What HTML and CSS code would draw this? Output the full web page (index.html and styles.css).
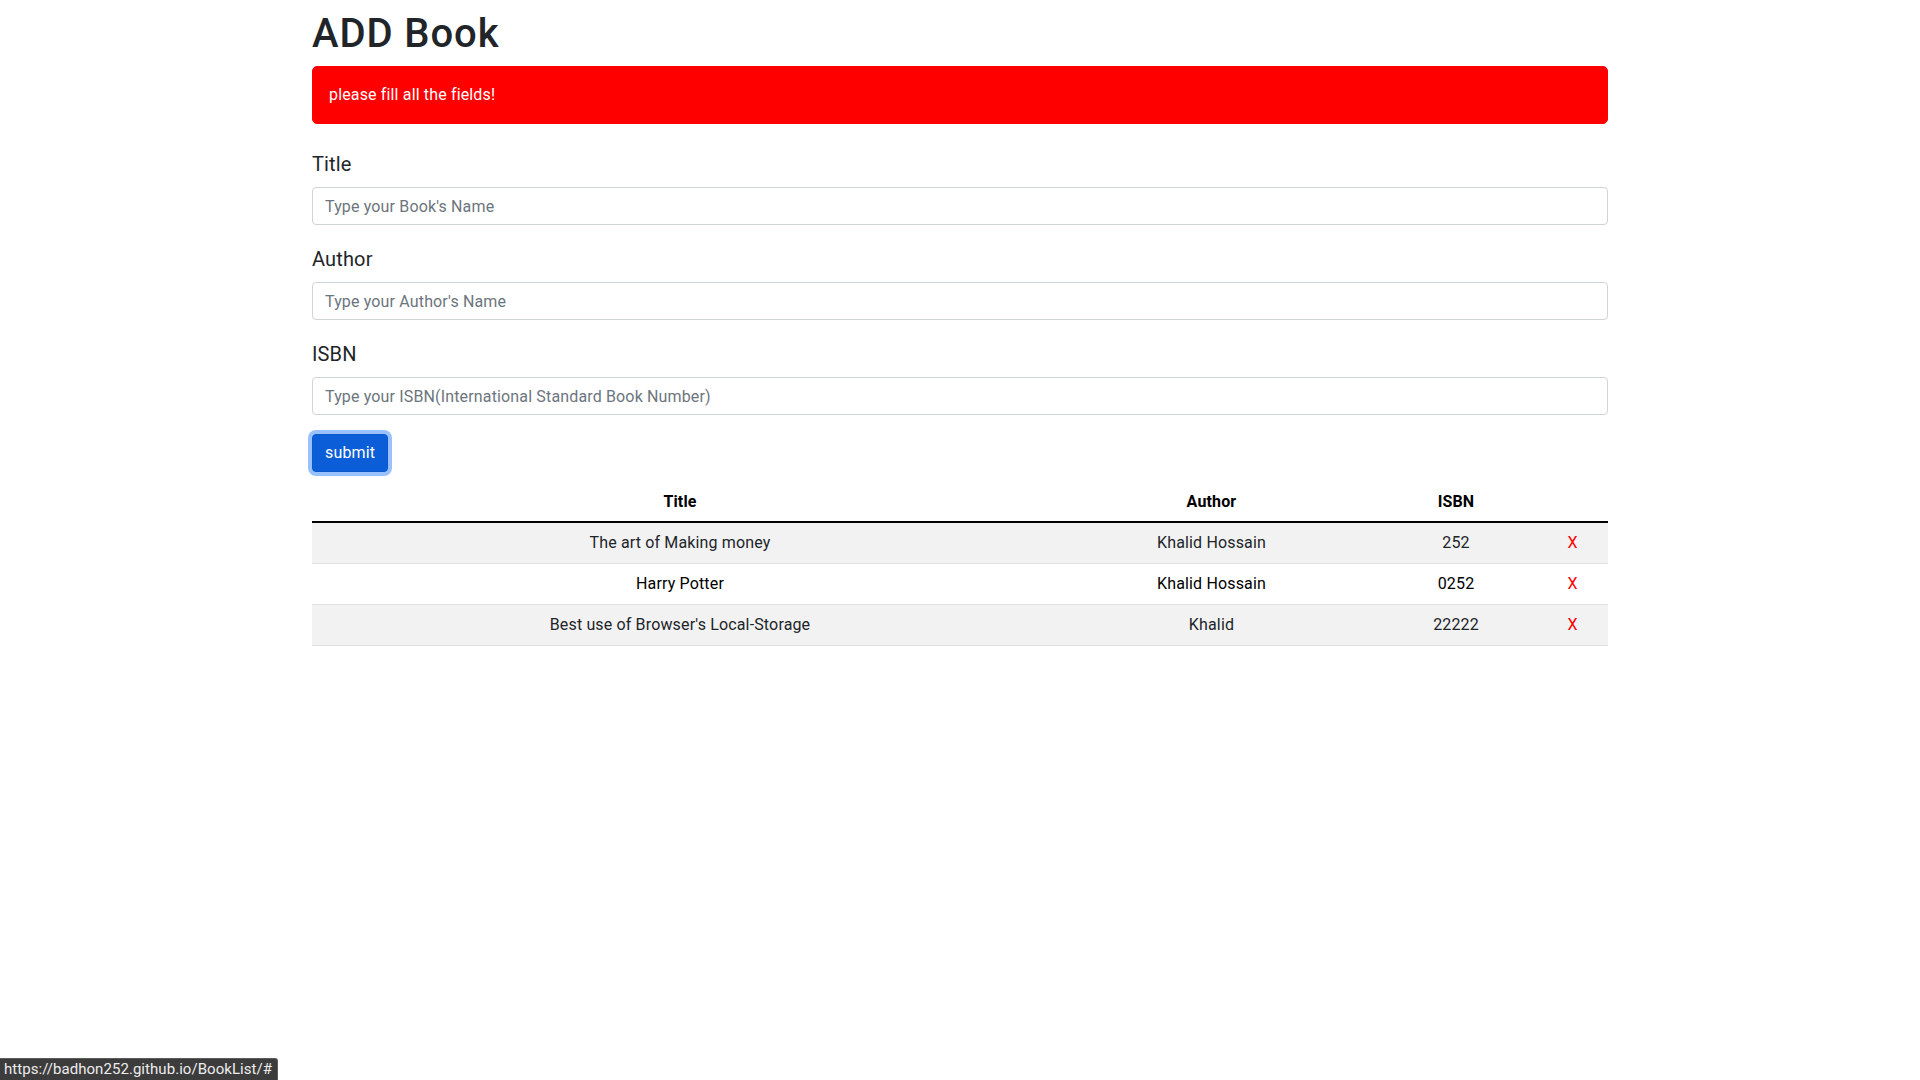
FILE: index.html
```html
<!DOCTYPE html>
<html lang="en">
<head>
<meta charset="utf-8">
<title>Book List</title>
<link rel="stylesheet" href="styles.css">
</head>
<body>
<div class="container">
  <h1 class="heading">ADD Book</h1>
  <div class="alert">please fill all the fields!</div>
  <form class="book-form">
    <div class="group">
      <label class="label" for="title">Title</label>
      <input class="field" id="title" type="text" placeholder="Type your Book's Name">
    </div>
    <div class="group">
      <label class="label" for="author">Author</label>
      <input class="field" id="author" type="text" placeholder="Type your Author's Name">
    </div>
    <div class="group">
      <label class="label" for="isbn">ISBN</label>
      <input class="field" id="isbn" type="text" placeholder="Type your ISBN(International Standard Book Number)">
    </div>
    <button class="submit" type="button">submit</button>
  </form>
  <table class="books">
    <colgroup>
      <col class="c-title"><col class="c-author"><col class="c-isbn"><col class="c-del">
    </colgroup>
    <thead>
      <tr><th>Title</th><th>Author</th><th>ISBN</th><th></th></tr>
    </thead>
    <tbody>
      <tr class="odd"><td>The art of Making money</td><td>Khalid Hossain</td><td>252</td><td><a class="del" href="#">X</a></td></tr>
      <tr class="even"><td>Harry Potter</td><td>Khalid Hossain</td><td>0252</td><td><a class="del" href="#">X</a></td></tr>
      <tr class="odd"><td>Best use of Browser's Local-Storage</td><td>Khalid</td><td>22222</td><td><a class="del" href="#">X</a></td></tr>
    </tbody>
  </table>
</div>
<div class="statusbar">https://badhon252.github.io/BookList/#</div>
</body>
</html>
```
FILE: styles.css
```css
* { box-sizing: border-box; }
html, body { margin: 0; padding: 0; }
body {
  font-family: Roboto, "Liberation Sans", sans-serif;
  font-size: 16px;
  line-height: 1.5;
  letter-spacing: 0.15px;
  color: #212529;
  background: #fff;
}
.container {
  width: 1320px;
  margin: 0 auto;
  padding: 10px 12px 0;
}
.heading {
  margin: 0 0 8px;
  font-size: 40px;
  font-weight: 500;
  line-height: 1.2;
  letter-spacing: 0.9px;
  color: #212529;
}
.alert {
  background: #ff0000;
  border: 1px solid #ff0000;
  border-radius: 5px;
  color: #fff;
  padding: 16px;
  margin-bottom: 25px;
}
.book-form { margin: 0; }
.group { margin-bottom: 19px; }
.label {
  display: block;
  font-size: 20px;
  line-height: 30px;
  margin-bottom: 8px;
  color: #212529;
}
.field {
  display: block;
  width: 100%;
  height: 38px;
  padding: 6px 12px;
  font-family: inherit;
  font-size: 16px;
  line-height: 24px;
  letter-spacing: inherit;
  color: #212529;
  background: #fff;
  border: 1px solid #ced4da;
  border-radius: 4px;
  outline: none;
}
.field::placeholder { color: #6c757d; opacity: 1; }
.submit {
  display: block;
  margin-top: 19px;
  height: 38px;
  padding: 6px 12px;
  font-family: inherit;
  font-size: 16px;
  line-height: 24px;
  letter-spacing: inherit;
  color: #fff;
  background: #0b5ed7;
  border: 1px solid #0a58ca;
  border-radius: 4px;
  box-shadow: 0 0 0 4px rgba(49, 132, 253, 0.5);
  cursor: pointer;
}
.books {
  width: 100%;
  margin-top: 9px;
  border-collapse: collapse;
  table-layout: fixed;
  color: #000;
  text-align: center;
}
.c-title { width: 736px; }
.c-author { width: 327px; }
.c-isbn { width: 162px; }
.c-del { width: 71px; }
.books th, .books td {
  padding: 8px;
  line-height: 24px;
  border-bottom: 1px solid #dee2e6;
}
.books th { font-weight: 700; padding-top: 9px; padding-bottom: 7px; }
.books tbody { border-top: 2px solid #000; }
.books tr.odd td { background: #f2f2f2; color: #212529; }
.del { color: #ff0000; text-decoration: none; }
.statusbar {
  position: fixed;
  left: 0;
  bottom: 0;
  height: 22px;
  padding: 0 5px 0 4px;
  background: #3c3c3c;
  border: 1px solid #5c5c5c;
  border-left: none;
  border-bottom: none;
  border-top-right-radius: 3px;
  color: #ececec;
  font-size: 15px;
  line-height: 21px;
  letter-spacing: 0.05px;
  white-space: nowrap;
}
```
